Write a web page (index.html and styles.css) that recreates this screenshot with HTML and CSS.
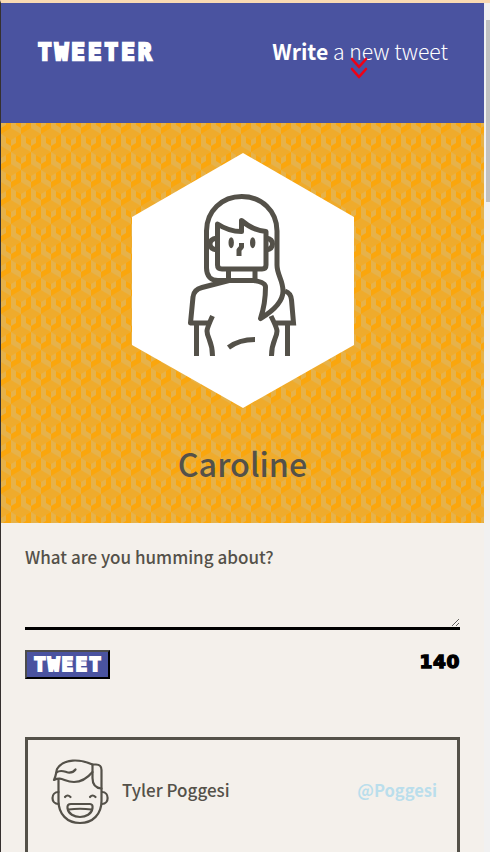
FILE: index.html
```html
<!DOCTYPE html>
<html lang="en">
<head>
<meta charset="utf-8">
<title>Tweeter</title>
<link rel="stylesheet" href="styles.css">
</head>
<body>
<div class="window">
  <div class="page">
    <nav class="navbar">
      <a class="brand">TWEETER</a>
      <div class="compose"><span class="compose-text"><b>Write</b> a new tweet</span>
        <svg class="arrows" viewBox="0 0 18 22" fill="none" stroke="#f00014" stroke-width="2.6" stroke-linecap="round" stroke-linejoin="round"><path d="M2 2l7 8 7-8M2 12l7 8 7-8"/></svg>
      </div>
    </nav>
    <header class="profile">
      <svg class="portrait" viewBox="132 153 222 255" fill="none" stroke="#545149" stroke-width="5" stroke-linejoin="round">
        <path fill="#fff" stroke="none" d="M243 153L354 217V345L243 408L132 345V217Z"/>
        <path d="M232 280.500H218C211 280.500 206.500 276 206.500 268V231C206.500 211 222 196.500 241.800 196.500S277 211 277 231V265C277 275 283 280 283 291C283 302 273 311 260.500 318.500C264 308 265.500 297 265.500 287C265.500 284 263 282 254 280.500H229L202 287.500C196 289 193.500 292 193 297L190.500 323H210"/>
        <path d="M217.500 224C225 229 233 231.500 241.500 231.500V220.500C249 227 257 231 266 231.500V265Q266 269 262 269H222Q217.500 269 217.500 265Z"/>
        <path d="M217 238Q210 239 210 244T217 250M266 238Q272.500 239 272.500 244T266 250M228.500 270V280M255 270V280M285 291Q291 293 291.500 300L293.500 323H274M196.500 323V356M287.500 323V356M212.500 316Q207 328 207 331C207 338 212.500 341 212.500 356M271 316Q277 328 277 331C277 338 271.500 341 271.500 356M228.500 347.500Q239 339.500 255 339.500" stroke-linejoin="miter"/>
        <path d="M241.500 243V247L239 250V256"/>
        <g fill="#545149" stroke="none"><ellipse cx="231.200" cy="242.700" rx="2.700" ry="5.500"/><ellipse cx="252.700" cy="242.700" rx="2.700" ry="5.500"/></g>
      </svg>
      <h2 class="name">Caroline</h2>
    </header>
    <main class="container">
      <form class="new-tweet">
        <label class="prompt" for="tweet-text">What are you humming about?</label>
        <textarea id="tweet-text" class="tweet-text"></textarea>
        <div class="actions">
          <button type="button" class="submit">TWEET</button>
          <output class="counter">140</output>
        </div>
      </form>
      <article class="tweet">
        <svg class="avatar" viewBox="51 759 58 66" fill="none" stroke="#545149" stroke-width="2.200" stroke-linecap="round" stroke-linejoin="round">
          <path d="M58.500 779V801C58.500 814 67 823 80 823S101.500 814 101.500 801V770Q101.500 764.500 96 764.500H92.500C80 759 64 758 57 769C56 773 56 776 54 780C62 776 64 782 74 782C84 782 90 775 92.500 772"/>
          <path d="M92.500 764.500V778C92.500 784 95 788 101.500 788.500M56.500 772.500C61 769 65 772 68 772.500Q73 773 75.500 769.500M58.500 792C50.500 792 50.500 804 58.500 804M102 792C109.500 792 109.500 804 102 804M65 797Q67.500 794 70.500 797M90 797Q92.500 794 95.500 797"/>
          <path d="M71 804H90Q93 804 92.500 808C91 820 69 820 67.500 808Q67 804 71 804ZM68.500 809.500Q80 808 91.500 809.500"/>
        </svg>
        <span class="author">Tyler Poggesi</span>
        <span class="handle">@Poggesi</span>
      </article>
    </main>
  </div>
  <div class="scrollbar"><div class="thumb"></div></div>
</div>
</body>
</html>
```
FILE: styles.css
```css
* { box-sizing: border-box; }
body {
  margin: 0;
  height: 852px;
  overflow: hidden;
  background: #f4f0eb;
  color: #545149;
  font-family: "Noto Sans CJK JP", sans-serif;
}
.window {
  display: flex;
  height: 852px;
  border-top: 3px solid #f9dab3;
  border-left: 1px solid #35302f;
  overflow: hidden;
}
.page { width: 483px; height: 849px; overflow: hidden; }
.navbar {
  display: flex;
  justify-content: space-between;
  height: 120px;
  padding: 33px 36px 0 37px;
  background: #4a53a0;
  color: #fff;
}
.brand, .submit {
  font-family: "DejaVu Sans Mono", monospace;
  font-weight: 700;
}
.brand {
  font-size: 22.5px;
  line-height: 32px;
  letter-spacing: 3.1px;
  -webkit-text-stroke: 2.3px #fff;
}
.compose { position: relative; font-size: 21.2px; line-height: 29px; font-weight: 300; }
.compose b { font-weight: 700; }
.compose-text { white-space: nowrap; }
.arrows { position: absolute; left: 78px; top: 21px; width: 18px; height: 22px; }
.profile {
  display: flex;
  flex-direction: column;
  align-items: center;
  height: 400px;
  padding-top: 30px;
  background-color: #efab2c;
  /* Nested isometric cubes, two offset rows per 20x36 tile */
  background-image: url("data:image/svg+xml,%3Csvg xmlns='http://www.w3.org/2000/svg' xmlns:xlink='http://www.w3.org/1999/xlink' width='20' height='36'%3E%3Cdefs%3E%3Cg id='c'%3E%3Cpath fill='rgb(230,178,74)' d='M-10-6L0 0V12L-10 6Z'/%3E%3Cpath fill='rgb(250,166,13)' d='M10-6L0 0V12L10 6Z'/%3E%3Cpath fill='rgb(239,171,44)' d='M-5-3L0-6L5-3L0 0Z'/%3E%3Cpath fill='rgb(250,166,13)' d='M-5-3L0 0V6L-5 3Z'/%3E%3Cpath fill='rgb(230,178,74)' d='M5-3L0 0V6L5 3Z'/%3E%3C/g%3E%3C/defs%3E%3Cuse xlink:href='%23c' x='10' y='17'/%3E%3Cuse xlink:href='%23c' x='0' y='35'/%3E%3Cuse xlink:href='%23c' x='20' y='35'/%3E%3Cuse xlink:href='%23c' x='0' y='-1'/%3E%3Cuse xlink:href='%23c' x='20' y='-1'/%3E%3C/svg%3E");
  background-size: 20px 36px;
}
.portrait { width: 222px; height: 255px; }
.name { margin: 30px 0 0; font-size: 32.3px; line-height: 50px; font-weight: 500; }
.container { padding: 20px 24px 0; }
.new-tweet { display: flex; flex-direction: column; }
.prompt { padding-bottom: 2px; font-size: 17.05px; line-height: 28px; font-weight: 500; }
.tweet-text {
  height: 57px;
  border: 0;
  border-bottom: 3px solid #000;
  background: transparent;
  resize: vertical;
}
.actions { display: flex; justify-content: space-between; margin-top: 20px; }
.submit {
  width: 85px;
  height: 29px;
  padding: 0 0 0 2px;
  border: 2px outset #000;
  border-color: #4c4c4c #000 #000 #4c4c4c;
  background: #4a53a0;
  color: #fff;
  font-size: 19.5px;
  line-height: 25px;
  letter-spacing: 2.1px;
  -webkit-text-stroke: 2px #fff;
}
.counter {
  color: #000;
  font-family: "DejaVu Sans", sans-serif;
  font-weight: 700;
  font-size: 18.5px;
  line-height: 23px;
  letter-spacing: .6px;
  -webkit-text-stroke: 1.4px #000;
}
.tweet {
  display: flex;
  align-items: center;
  height: 200px;
  margin-top: 58px;
  padding: 0 21px 90px 23px;
  border: 3px solid #545149;
}
.avatar { width: 58px; height: 66px; }
.author { margin: 0 0 6px 13px; font-size: 17px; font-weight: 500; }
.handle { margin: 0 -1px 5px auto; color: #badeec; font-size: 16.5px; font-weight: 700; }
.scrollbar { width: 6px; height: 849px; padding: 17px 0 0 2px; background: #f1f1f1; }
.thumb { height: 182px; background: #c1c1c1; }
```
